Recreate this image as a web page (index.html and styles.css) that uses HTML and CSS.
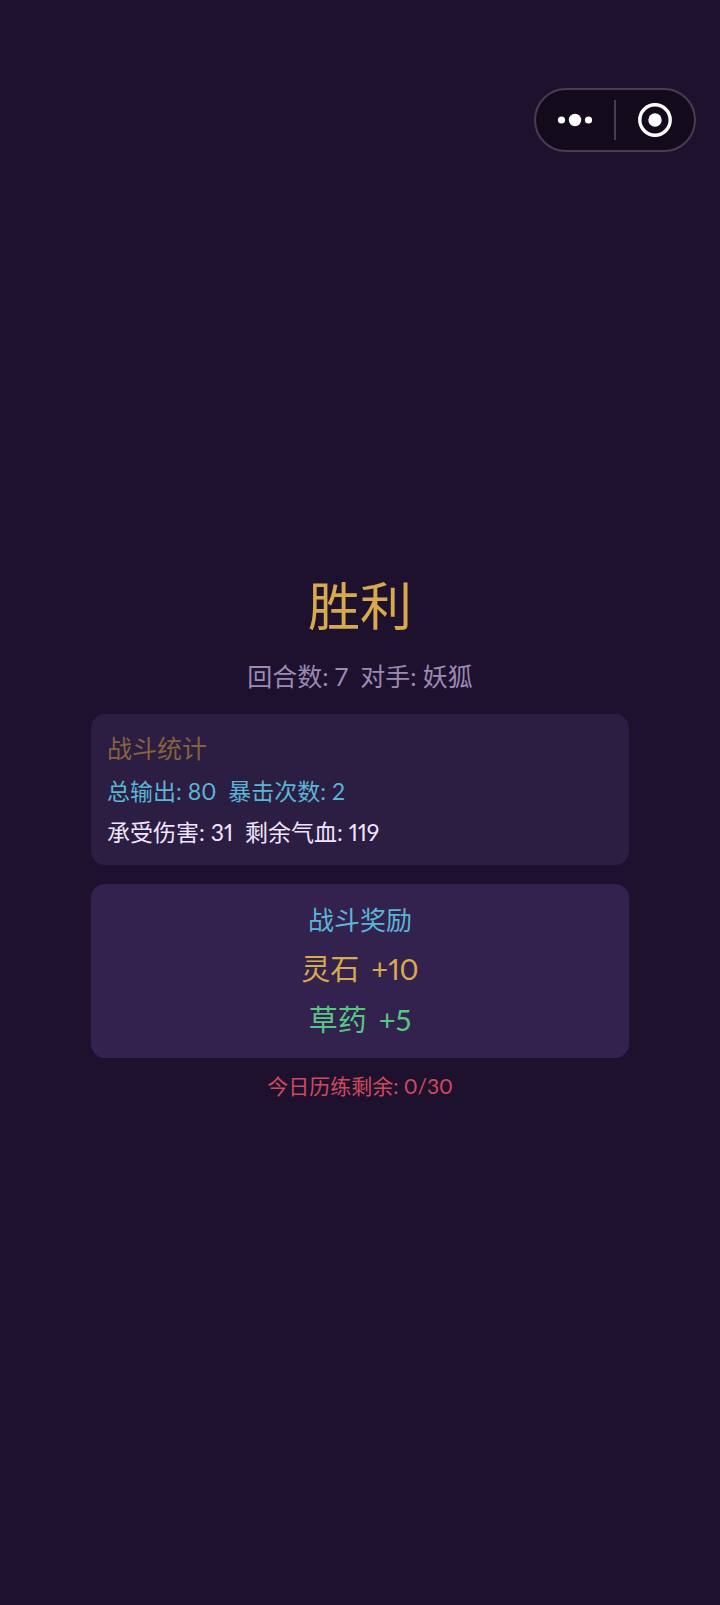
FILE: index.html
```html
<!DOCTYPE html>
<html lang="zh-CN">
<head>
  <meta charset="UTF-8">
  <meta name="viewport" content="width=device-width, initial-scale=1">
  <title>战斗结果</title>
  <link rel="stylesheet" href="styles.css">
</head>
<body>

<header class="topbar">
  <div class="capsule">
    <button type="button" aria-label="更多">
      <svg width="36" height="36" viewBox="0 0 36 36" fill="#fff">
        <circle cx="4.5" cy="18" r="3.6"/>
        <circle cx="18" cy="18" r="6.2"/>
        <circle cx="31.5" cy="18" r="3.6"/>
      </svg>
    </button>
    <span class="divider"></span>
    <button type="button" aria-label="关闭">
      <svg width="36" height="36" viewBox="0 0 36 36">
        <circle cx="18" cy="18" r="15.2" fill="none" stroke="#fff" stroke-width="3.4"/>
        <circle cx="18" cy="18" r="6.7" fill="#fff"/>
      </svg>
    </button>
  </div>
</header>

<main class="result">
  <h1>胜利</h1>
  <p class="summary"><span>回合数: 7</span><span>对手: 妖狐</span></p>

  <section class="card stats">
    <h2>战斗统计</h2>
    <p class="output"><span>总输出: 80</span><span>暴击次数: 2</span></p>
    <p><span>承受伤害: 31</span><span>剩余气血: 119</span></p>
  </section>

  <section class="card rewards">
    <h2>战斗奖励</h2>
    <p class="stone"><span>灵石</span><span>+10</span></p>
    <p class="herb"><span>草药</span><span>+5</span></p>
  </section>

  <p class="remain">今日历练剩余: 0/30</p>
</main>

</body>
</html>
```

FILE: styles.css
```css
* {
  box-sizing: border-box;
}
body {
  margin: 0;
  min-height: 100vh;
  background: #1d112e;
  color: #f0e6ff;
  font-family: Lato, "Noto Sans CJK SC", sans-serif;
  font-variant-numeric: proportional-nums;
}
h1, h2, p {
  margin: 0;
  font-weight: 400;
}

/* mini program capsule */
.topbar {
  display: flex;
  justify-content: flex-end;
  padding: 88px 24px 0;
}
.capsule {
  display: flex;
  align-items: center;
  width: 162px;
  height: 64px;
  border: 2px solid #473d52;
  border-radius: 32px;
  background: #130b1c;
}
.capsule button {
  flex: 1;
  display: flex;
  justify-content: center;
  padding: 0;
  border: none;
  background: none;
  cursor: pointer;
}
.divider {
  width: 2px;
  height: 40px;
  background: #473d52;
}

.result {
  display: flex;
  flex-direction: column;
  padding: 416px 91px 40px;
  text-align: center;
}
h1 {
  font-size: 52px;
  line-height: 76px;
  color: #d9a94e;
}
.summary {
  margin: 14px 0 20px;
  font-size: 25px;
  line-height: 36px;
  color: #9b8ab4;
}
span + span {
  margin-left: 12px;
}

.card {
  border-radius: 14px;
}
.stats {
  padding: 16px 16px 12px;
  background: #2c1d42;
  text-align: left;
  font-size: 23px;
  line-height: 41px;
}
.stats h2 {
  margin-bottom: 5px;
  font-size: 25px;
  line-height: 36px;
  color: #84633f;
}
.output {
  color: #5bb5d6;
}
.rewards {
  margin-top: 19px;
  padding: 15px 16px 13px;
  background: #33224d;
  font-size: 29px;
  line-height: 51px;
}
.rewards h2 {
  margin-bottom: 2px;
  font-size: 26px;
  line-height: 42px;
  color: #5bb5d6;
}
.stone {
  color: #d9a94e;
}
.herb {
  color: #57c785;
}
.remain {
  margin-top: 11px;
  font-size: 21px;
  line-height: 34px;
  color: #cf4a5e;
}
```
